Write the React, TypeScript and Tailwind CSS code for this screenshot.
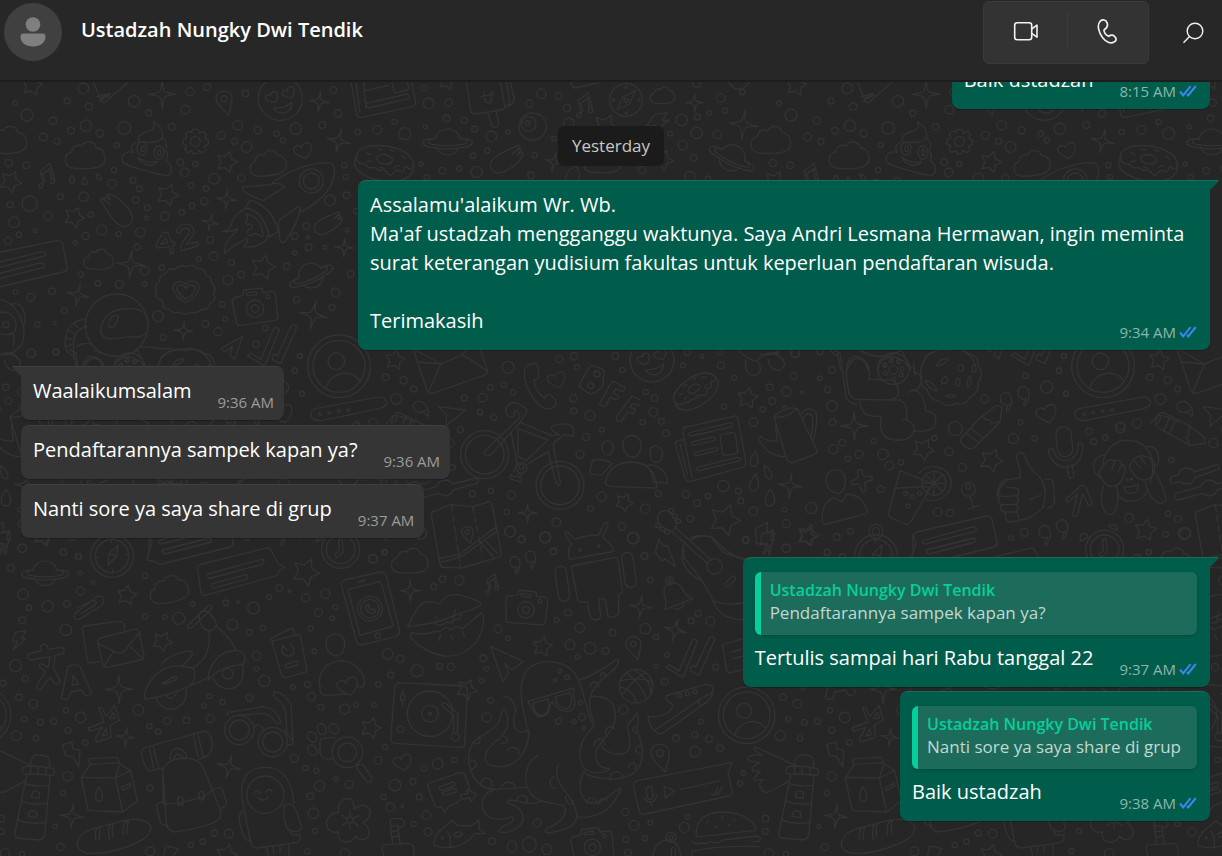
import type { ReactNode } from "react";

type Dot = [number, number, number];

/* ---------- wallpaper shapes ---------- */

const TILE = 764;

function Region({ x, y, children }: { x: number; y: number; children: ReactNode }) {
  return <g transform={`translate(${x} ${y}) scale(0.33333)`}>{children}</g>;
}

function Dots({ list }: { list: Dot[] }) {
  return (
    <>
      {list.map(([x, y, r], i) => (
        <circle key={i} cx={x} cy={y} r={r} />
      ))}
    </>
  );
}

function Stars({ list }: { list: Dot[] }) {
  return (
    <>
      {list.map(([x, y, r], i) => {
        const tilt = -80 + ((i * 37) % 20);
        const pts = Array.from({ length: 10 }, (_, k) => {
          const a = ((tilt + k * 36) * Math.PI) / 180;
          const d = k % 2 ? r * 0.52 : r;
          return `${(x + d * Math.cos(a)).toFixed(1)},${(y + d * Math.sin(a)).toFixed(1)}`;
        });
        return <polygon key={i} points={pts.join(" ")} />;
      })}
    </>
  );
}

function Sparkles({ list }: { list: Dot[] }) {
  return (
    <>
      {list.map(([x, y, r], i) => (
        <path
          key={i}
          transform={`translate(${x} ${y}) rotate(${(i * 7) % 15}) scale(${r / 40})`}
          d="M0 -40Q2 -7 8 -7Q14 -4 40 0Q10 2 8 8Q4 12 0 40Q-2 12 -8 8Q-10 4 -40 0Q-10 -4 -8 -8Q-4 -12 0 -40Z"
        />
      ))}
    </>
  );
}

function Place({ x, y, s = 1, r = 0, children }: { x: number; y: number; s?: number; r?: number; children: ReactNode }) {
  return <g transform={`translate(${x} ${y}) rotate(${r}) scale(${s})`}>{children}</g>;
}

const Cloud = () => (
  <path d="M-38 38C-66 32-66-4-40-10C-38-28-22-34-10-28C2-48 32-42 34-22C58-22 70 14 50 30C36 42-14 42-38 38Z" />
);
const Heart = () => <path d="M8 26C-4 22-24 12-27 2C-28-14-8-16-4-6C0-22 24-30 26-8C27 6 16 20 8 26Z" />;
const Note = () => (
  <path d="M-12 24L-22-14L8-38L22 12M-20-2L8-22M-12 24C-14 38-26 42-26 32C-26 24-18 20-12 24M-6 18L-14-6L6-20L12 8M22 12C24 22 12 26 10 18C8 10 16 6 22 12" />
);
const Planet = () => (
  <>
    <path d="M-38-8C-30-50 30-50 38-8M-34 16C-22 46 22 46 34 16" />
    <path d="M-38-10C-86-12-86 14-40 17C-14 22 14 22 40 17C86 14 86-12 38-10M-38-10C-64-8-64 6-38 8C-12 13 12 13 38 8C64 6 64-8 38-10" />
  </>
);
const Donut = () => (
  <>
    <ellipse rx="24" ry="14" transform="rotate(12)" />
    <path d="M-84-10C-84-62 90-48 86 20C84 32 70 30 66 22C60 18 56 50 44 34C30 24 24 60 10 42C0 24-12 40-22 30C-34 14-44 38-56 16C-66 10-84 20-84-10Z" />
    <path d="M-84-10C-110 34-44 66 20 66C70 66 94 40 86 8M-54-20l12 6M-22-32l14 4M18-28l12 4M50-10l12 8M-52 8l12-4M30 24l14-6M-14 24l14 4" />
  </>
);
const Camera = () => (
  <>
    <path d="M-62-26L-36-34L-34-50L20-56L24-42L50-46Q60-46 62-34L68 30Q68 40 58 42L-46 56Q-54 56-56 46L-68-14Q-70-24-62-26Z" />
    <circle cy="6" r="26" />
    <circle cy="6" r="11" />
    <circle cx="38" cy="-30" r="6" />
    <rect x="-22" y="-44" width="32" height="9" rx="4" transform="rotate(-6)" />
  </>
);
const Avatar = () => (
  <>
    <circle r="94" />
    <circle r="78" />
    <circle cx="-8" cy="-15" r="25" />
    <path d="M-40 66C-26 14 40 8 62 42" />
  </>
);
const Pin = () => (
  <>
    <path d="M14 44C0 26-24 12-24-8C-24-34 20-36 24-10C24 12 18 22 14 44Z" />
    <circle cy="-6" r="9" />
  </>
);
const Emoji = () => (
  <>
    <circle r="66" />
    <Place x={-26} y={-4} s={0.7} r={-12}><Heart /></Place>
    <Place x={24} y={-18} s={0.7} r={-12}><Heart /></Place>
    <path d="M-20 28C0 32 22 24 34 12C36 30 22 46 6 44C-8 44-16 38-20 28Z" />
  </>
);
const Compass = () => (
  <>
    <circle r="64" />
    <circle r="50" />
    <path d="M-12 28L-10-6L18-32L14 0ZM-10-6L14 0M-2-50v10M2 50v-10M50-4l-10 2M-50 4l10-2" />
  </>
);
const Comet = () => (
  <path d="M-48-24C-30-2-20 30 8 48C30 64 56 38 44 14C34-8 4-38-20-44C-36-44-26-36-18-28C-30-34-46-42-36-28L-18-12C-32-24-54-40-48-24Z" />
);
const Bolt = () => <path d="M-22-30L20-44L8-8L26-10L-18 48L-6 6L-28 10Z" />;
const Quotes = () => (
  <path d="M-18 8C-46 22-56-22-30-26C-8-28-4 10-24 32C-30 30-24 16-18 8M34-10C6 4-4-40 22-44C44-46 48-8 28 14C22 12 28-2 34-10" />
);
const Checks = () => (
  <>
    <path d="M-80 30L-68 22L-40 42L0-52Q10-58 16-48L-28 60Z" />
    <path d="M-6 32L4 24L10 30L52-60Q62-66 68-54L20 54L-4 42Z" />
  </>
);
const Clock = () => (
  <>
    <circle r="57" />
    <circle r="43" />
    <path d="M-6-30L4-32L8 8L-12 24L-18 16L-4 2Z" />
  </>
);
const Bubble = () => (
  <path d="M-108-10Q-112-24-98-28L104-78Q116-80 120-68L140-32L162-18L142-8Q144 4 134 8L-86 68Q-94 70-98 60ZM-76 2L92-44Q102-36 92-28L-72 16Q-82 8-76 2M-62 32L42 4Q52 10 42 18L-58 46Q-68 40-62 32" />
);
const Pencil = () => (
  <path d="M-76 18L-18-44L30-80L46-74L40-30L-36 46Q-52 58-70 40Q-82 28-76 18ZM-18-44Q-6-48-2-36Q12-42 14-24Q28-32 40-30M-62 2L-22 34M-48-12L-8 20" />
);
const MilkDrop = () => <path d="M0-22C14 0 14 22 0 22C-14 22-14 2 0-22Z" />;

function Doodles() {
  return (
    <g id="doodles">
      <Region x={0} y={80}>
        <Dots
          list={[
            [250, 25, 16], [201, 63, 9], [267, 80, 11], [402, 64, 17], [446, 99, 9], [570, 35, 12], [621, 21, 10],
            [556, 89, 13], [736, 40, 10], [1000, 30, 10], [1014, 100, 11], [967, 135, 10], [887, 146, 17], [1073, 156, 8],
            [45, 70, 7], [81, 105, 18], [159, 122, 11], [258, 137, 17], [299, 160, 11], [213, 152, 10], [373, 144, 19],
            [515, 140, 10], [713, 136, 14], [664, 166, 12], [704, 184, 9], [740, 201, 16], [773, 151, 11], [830, 161, 8],
            [849, 181, 8], [130, 171, 12], [171, 184, 9], [350, 195, 8], [342, 271, 8], [26, 249, 11], [79, 256, 10],
            [336, 311, 13], [541, 246, 10], [586, 252, 8], [554, 277, 13], [399, 301, 9], [418, 326, 9], [643, 296, 16],
            [724, 294, 11], [573, 316, 8], [618, 326, 8], [181, 350, 9], [251, 350, 14], [407, 359, 10], [576, 377, 8],
            [613, 364, 11], [545, 397, 8], [494, 409, 13], [442, 383, 9], [440, 414, 6], [30, 374, 9], [89, 371, 23],
            [144, 409, 13], [272, 404, 8], [42, 427, 16], [57, 464, 8], [106, 452, 6], [24, 483, 11], [305, 450, 15],
            [257, 468, 11], [356, 462, 8], [421, 457, 14], [226, 488, 6], [411, 501, 9], [631, 479, 10], [641, 529, 13],
            [596, 537, 7], [694, 547, 9], [434, 573, 13], [486, 563, 8], [242, 583, 8], [294, 610, 8], [358, 613, 12],
            [433, 613, 7], [684, 600, 14], [724, 584, 10], [860, 559, 10], [884, 519, 6], [926, 502, 10], [974, 502, 6],
            [924, 472, 5], [919, 438, 10], [884, 469, 10], [990, 361, 16], [1040, 346, 10], [1038, 291, 8], [1033, 256, 8],
            [1069, 394, 8], [1042, 450, 6], [1052, 582, 10], [1007, 637, 13], [996, 682, 9], [890, 659, 9], [666, 673, 8],
            [676, 718, 7], [616, 731, 10], [654, 755, 12], [490, 772, 9], [474, 709, 16], [796, 744, 8], [768, 793, 10],
            [900, 828, 8], [193, 692, 9], [156, 634, 10], [92, 652, 12], [47, 636, 7], [112, 733, 8], [164, 729, 5],
            [94, 820, 12], [167, 816, 8],
          ]}
        />
        <Stars list={[[96, 16, 32], [32, 305, 34], [223, 412, 32], [503, 345, 34], [680, 246, 33], [789, 562, 38]]} />
        <Sparkles
          list={[
            [487, 43, 42], [958, 65, 30], [1016, 183, 36], [680, 358, 30], [631, 427, 26], [392, 553, 42], [234, 645, 34],
            [551, 752, 28], [940, 705, 42], [1033, 503, 28],
          ]}
        />
        <Place x={255} y={226}><Cloud /></Place>
        <Place x={803} y={250} s={0.92} r={-6}><Cloud /></Place>
        <Place x={20} y={180}><Cloud /></Place>
        <Place x={295} y={538} s={0.75}><Cloud /></Place>
        <path d="M216 285C206 298 206 308 216 308C226 308 226 298 216 285ZM253 291C244 304 246 314 254 314C266 314 264 302 253 291ZM288 282C290 298 298 304 304 298C308 290 298 284 288 282Z" />
        <Place x={142} y={288}><Note /></Place>
        <path d="M278 0L300 55L328 41L290 50M328 41C334 44 322 52 310 56L298 62L312 69L392 0" />
        {/* pile with eyes */}
        <path d="M415 182C412 158 440 158 456 150C466 144 462 134 462 126C478 136 490 148 488 168C486 184 460 190 428 186Q416 188 415 182M410 188C392 194 392 210 400 218C380 210 360 224 368 246C378 258 480 286 500 286C520 282 518 252 498 242C508 224 496 206 492 212M488 176C500 182 502 194 498 204M414 232C432 246 452 250 472 244C466 262 426 260 414 232Z" />
        <ellipse cx="426" cy="206" rx="15" ry="20" /><ellipse cx="477" cy="218" rx="15" ry="20" />
        <ellipse cx="428" cy="206" rx="5" ry="9" /><ellipse cx="478" cy="218" rx="5" ry="9" />
        {/* gear */}
        <path d="M576 158L578 148L594 148L598 160L610 154L620 164L614 176L625 180L625 194L614 198L618 210L608 218L596 212L592 221L580 221L576 212L564 218L554 208L560 196L549 192L549 178L560 174L556 162L566 153Z" />
        <circle cx="586" cy="184" r="15" />
        <Place x={672} y={62}><Pin /></Place>
        <Place x={841} y={55}><Emoji /></Place>
        <Place x={908} y={209}><Heart /></Place>
        {/* rocket */}
        <path d="M815 310C870 270 930 248 985 248Q1002 250 1004 268C1004 320 970 360 900 398M815 310Q850 310 854 320L790 362Q740 344 728 328Q724 320 736 320L815 314M752 360L735 384Q790 390 808 470L834 456M752 360Q820 384 834 456M834 424L892 380Q902 378 900 392C894 430 870 460 856 484Q844 492 840 480ZM735 388C706 396 700 420 690 440Q680 456 666 454Q688 460 714 446C700 470 670 480 674 520C690 500 716 490 742 474Q746 486 730 500C770 504 800 490 804 466M738 402C750 410 730 430 742 434C756 426 766 444 748 448C730 456 750 474 760 462C776 454 782 480 790 466C786 440 780 410 738 402" />
        <circle cx="934" cy="303" r="36" /><circle cx="934" cy="303" r="24" />
        <Place x={350} y={387}><Comet /></Place>
        <Place x={988} y={430} s={0.8} r={100}><Comet /></Place>
        {/* 42 */}
        <path d="M492 456L468 492Q466 504 476 504L508 500L512 522L520 520L518 498L526 494L524 486L516 486L504 458ZM498 474L502 490L482 492ZM530 456C530 426 580 424 582 452C584 468 566 478 560 492L592 486Q600 492 592 498L546 512Q540 508 544 496C550 476 570 466 568 452C564 438 542 444 540 460Z" />
        {/* badge */}
        <path d="M500 578Q506 562 526 568Q540 552 560 560Q580 550 592 566Q614 564 618 586Q636 590 634 608Q652 622 640 640Q652 662 630 670Q626 692 604 688Q590 704 572 696Q554 710 540 696Q520 704 510 688Q484 688 488 662Q460 654 470 634Q460 614 478 606Q478 584 500 578Z" />
        <path d="M556 669C536 654 520 642 519 622C524 600 548 600 558 614C568 598 594 600 597 622C594 646 574 658 556 669ZM556 658C542 646 530 636 530 622C534 610 550 612 558 626C566 612 584 610 586 624C584 640 572 650 556 658Z" />
        <Place x={765} y={680}><Camera /></Place>
        <Place x={933} y={587} s={0.95} r={-24}><Planet /></Place>
        {/* astronaut */}
        <circle cx="350" cy="736" r="94" />
        <path d="M302 756C304 700 350 682 400 686Q438 690 444 720M302 756C310 790 350 772 390 770Q430 776 444 750M328 740C322 716 344 700 354 708C356 724 340 750 328 740ZM256 718C210 720 192 760 196 800Q204 826 222 828L230 870M222 828C216 780 220 750 260 740M206 750l16 12M196 774l20 4M198 800l18-6M224 730l10 14M250 870C262 824 300 822 312 870M230 800Q250 784 276 794M342 870C346 820 412 816 440 870M410 806L440 864M418 800C460 800 490 810 516 806M474 860C480 820 520 806 560 806C600 804 630 830 634 860" />
        <circle cx="382" cy="840" r="5" /><circle cx="404" cy="844" r="6" /><circle cx="362" cy="854" r="5" />
        {/* paper plane */}
        <path d="M662 806L728 770L704 838L690 824L698 798L676 816Z" />
        <Place x={822} y={797}><Checks /></Place>
        {/* banner */}
        <path d="M-16 520L170 482Q184 480 188 494L202 564Q200 574 190 576L-16 624M-16 550L130 514Q142 520 134 528L-16 566M-16 584L124 548Q138 552 132 562L-16 600" />
        <path d="M-10 656C50 660 86 740 66 792Q40 830 -10 824M36 672C70 664 84 710 70 742M-10 700C14 690 40 700 48 730C52 760 30 770 -6 760M30 764Q48 750 40 800M10 820Q50 820 62 850" />
        <circle cx="18" cy="734" r="9" />
      </Region>

      <Region x={350} y={80}>
        <Dots
          list={[
            [222, 24, 8], [236, 70, 16], [296, 68, 11], [290, 115, 10], [343, 121, 9], [134, 126, 8], [82, 150, 13],
            [164, 161, 18], [226, 140, 6], [374, 147, 9], [424, 169, 16], [474, 157, 7], [412, 212, 8], [369, 227, 8],
            [277, 272, 10], [328, 266, 8], [380, 276, 17], [213, 252, 6], [230, 292, 8], [543, 286, 10], [554, 226, 8],
            [538, 71, 11], [574, 41, 14], [626, 48, 11], [651, 84, 11], [612, 176, 7], [656, 130, 16], [1042, 111, 9],
            [995, 120, 17], [1040, 159, 17], [960, 161, 7], [998, 196, 14], [1031, 234, 10], [1078, 99, 7], [1125, 92, 8],
            [1112, 54, 13], [1177, 36, 8], [1102, 164, 12], [1020, 290, 16], [876, 270, 11], [1040, 10, 12], [1074, 296, 8],
          ]}
        />
        <Stars list={[[290, 2, 28], [766, 140, 38], [938, 240, 32]]} />
        <Sparkles list={[[1034, 68, 28], [1180, 134, 44], [612, 246, 28]]} />
        <path d="M4 10L20 104Q26 116 36 112L186 80Q198 76 196 62L184 0M18 10L30 96M40 0L48 84M46 32L116 16M124 0L132 34Q134 40 142 38L172 30Q178 28 176 20L170 0M50 70L170 42Q182 48 176 56L56 84Q44 78 50 70" />
        <path d="M348 0L362 92Q366 104 378 102L452 90Q466 88 464 76L450 0M464 80Q494 76 492 54L480 0M470 80Q480 74 478 60L468 0M414 100L426 138Q438 148 446 134L440 96M394 50L430 42M400 48L402 36M428 46L426 34M404 56C408 76 428 72 424 50" />
        <circle cx="548" cy="140" r="41" /><circle cx="536" cy="132" r="22" /><circle cx="533" cy="130" r="7" />
        <Place x={293} y={186}><Planet /></Place>
        <Place x={104} y={238}><Donut /></Place>
        <Place x={1146} y={234} r={26}><Planet /></Place>
        <Place x={474} y={238} s={0.95} r={98}><Comet /></Place>
        <Place x={706} y={76}><Note /></Place>
        <circle cx="828" cy="60" r="49" /><path d="M802 88L818 52L856 32L838 72Z" /><circle cx="828" cy="61" r="6" />
        <circle cx="828" cy="22" r="3" /><circle cx="829" cy="98" r="3" /><circle cx="791" cy="60" r="3" /><circle cx="866" cy="60" r="3" />
        <Place x={937} y={46} s={0.62}><Cloud /></Place>
        <path d="M914 104L952 98L938 122L956 120L908 162L918 136L890 138Z" />
        <path d="M660 0Q664 22 676 24L746 8M1134 0Q1150 36 1174 26Q1190 22 1196 6M646 300Q650 270 676 258Q690 270 688 298" />
        <Place x={758} y={240} s={0.95}><Cloud /></Place>
      </Region>

      <Region x={280} y={340}>
        <Dots
          list={[
            [59, 47, 7], [45, 92, 8], [66, 161, 8], [317, 112, 10], [371, 121, 11], [401, 147, 9], [349, 177, 16],
            [230, 258, 12], [279, 250, 14], [553, 174, 9], [608, 173, 13], [631, 142, 8], [671, 134, 8], [699, 157, 8],
            [685, 82, 18], [600, 217, 8], [641, 232, 9], [541, 269, 9], [508, 309, 14], [838, 57, 11], [882, 49, 11],
            [891, 81, 8], [1006, 48, 10], [1027, 90, 8], [880, 175, 11], [882, 213, 9], [930, 227, 15], [966, 269, 7],
            [918, 291, 11], [900, 343, 12], [577, 461, 9], [633, 452, 8], [694, 465, 12], [680, 516, 8], [690, 575, 16],
            [725, 598, 10], [795, 592, 15], [829, 547, 13], [820, 635, 9], [965, 470, 14], [932, 505, 9], [1026, 560, 11],
            [1060, 595, 17], [424, 580, 16], [313, 636, 8], [279, 657, 13],
          ]}
        />
        <Stars list={[[345, 60, 31], [1032, 487, 28]]} />
        <Sparkles list={[[743, 519, 28]]} />
        <Place x={177} y={79}><Avatar /></Place>
        <path d="M106 206L290 172Q316 168 320 186Q322 198 298 206L122 242Q94 242 92 224Q92 210 106 206Z" />
        <circle cx="121" cy="223" r="4" /><circle cx="148" cy="218" r="4" /><circle cx="176" cy="214" r="4" /><circle cx="205" cy="210" r="4" />
        <path d="M390 0L442 154Q446 162 456 160L612 106Q624 102 622 90L590 0M414 66L482 72L548 44L620 92M482 72L446 156M396 24L482 72M548 44L584 0" />
        <path d="M440 210C410 230 390 204 404 188C428 174 452 204 444 230C440 226 436 220 428 216M476 200L556 210L498 258L500 226Z" />
        <path d="M320 250L340 226Q370 226 404 248M352 228l-8 20M376 232l-6 16" />
        {/* handset and heart */}
        <path d="M740 78Q760 64 774 76L776 112Q770 122 762 118C760 142 778 162 794 176Q798 160 812 164L828 182Q832 198 812 206C778 214 736 150 734 108Q732 86 740 78Z" />
        <Place x={829} y={117}><Heart /></Place>
        <path d="M936 76L966 86Q978 96 968 112Q978 130 960 146Q946 164 928 160L902 144Q896 138 900 130L928 82Q932 76 936 76Z" />
        <circle cx="951" cy="102" r="9" /><circle cx="932" cy="137" r="9" />
        <path d="M1000 124L1034 142Q1036 154 1024 154L1008 146L1000 158L1016 168Q1016 180 1004 178L990 172L978 196Q966 204 958 192L994 128ZM1056 168L1080 180M1056 168L1008 232Q1010 246 1024 244L1042 216L1060 222L1066 208L1050 202L1058 190L1080 196" />
        {/* bicycle */}
        <circle cx="614" cy="344" r="72" /><circle cx="614" cy="344" r="58" />
        <circle cx="840" cy="436" r="72" /><circle cx="840" cy="436" r="58" />
        <path d="M612 336L720 232C716 210 700 206 704 222C700 240 676 230 678 208C682 186 706 184 720 194L738 206Q744 214 736 222L722 246L630 346Q618 352 612 336M722 248L816 286L838 284Q812 272 814 260Q850 246 874 256Q884 270 880 288L852 284L822 308M714 266L804 300L738 362L714 350ZM694 280L712 376M806 334L740 374M804 336L828 428Q836 440 842 430L820 320L822 308" />
        <circle cx="724" cy="384" r="16" /><circle cx="724" cy="380" r="7" /><path d="M710 376L700 396M720 398L704 412L692 404L690 416L722 426L726 416L716 412L734 394" />
        {/* people */}
        <path d="M966 324C962 296 1000 296 1000 322C998 356 968 350 966 324ZM1028 316C1026 278 1080 276 1084 314C1080 364 1036 364 1028 316ZM940 360Q970 354 996 370L964 406L930 402Q930 376 940 360ZM976 430C980 390 1010 366 1056 366C1100 368 1130 396 1130 444L1000 440Q978 438 976 430Z" />
        {/* map */}
        <path d="M456 516L512 494L578 500L624 486Q634 484 636 492L664 640Q664 650 654 652L546 684L492 682Q482 682 480 672L454 524ZM476 656L540 642L650 560M480 668L544 650L654 572M600 606L640 650M612 598L652 640" />
        <path strokeDasharray="6 4" d="M514 496L542 682M578 502L608 650" />
        <Place x={562} y={580} s={0.7}><Pin /></Place>
      </Region>

      <Region x={640} y={340}>
        <Dots
          list={[
            [17, 156, 8], [44, 174, 10], [40, 216, 13], [64, 244, 9], [8, 246, 8], [78, 280, 10], [142, 38, 9], [186, 49, 6],
            [240, 36, 8], [129, 76, 7], [243, 76, 11], [283, 113, 7], [252, 200, 8], [466, 40, 13], [540, 36, 9],
            [461, 108, 11], [539, 115, 7], [576, 90, 10], [389, 142, 10], [397, 183, 10], [368, 208, 8], [439, 155, 14],
            [486, 157, 4], [563, 149, 9], [576, 199, 16], [578, 247, 10], [341, 246, 13], [607, 308, 10], [580, 327, 14],
            [657, 343, 12], [623, 356, 8], [702, 303, 8], [729, 343, 16], [748, 377, 13], [783, 367, 8], [883, 294, 8],
            [927, 335, 12], [946, 266, 21], [967, 382, 12], [1034, 177, 12], [722, 448, 10], [893, 516, 13], [930, 519, 11],
            [514, 504, 17], [433, 509, 7], [439, 551, 12], [439, 625, 13], [590, 591, 10], [632, 574, 9], [562, 637, 10],
            [340, 514, 13], [302, 483, 9], [295, 453, 9], [250, 438, 17], [203, 468, 8], [171, 489, 10], [138, 463, 11],
            [151, 536, 10], [55, 461, 9], [16, 506, 14], [14, 648, 10], [317, 601, 10], [608, 650, 9],
          ]}
        />
        <Stars list={[[323, 174, 32], [850, 328, 34], [1054, 361, 36], [254, 540, 48], [504, 586, 34]]} />
        <Sparkles list={[[643, 258, 42], [451, 437, 36]]} />
        <Place x={36} y={60}><Emoji /></Place>
        <Place x={162} y={146} s={0.82} r={-42}><Donut /></Place>
        {/* newspaper */}
        <path d="M136 262L284 228Q292 226 294 236L318 370Q318 380 308 382L152 424Q138 426 134 412L106 314Q106 304 114 302L134 298M128 274L156 414M134 270Q126 262 136 260M120 312L142 404M148 278L272 248Q284 252 276 260L154 288Q144 286 148 278M156 306L220 290Q232 294 222 302L160 316Q150 314 156 306M164 338L228 322Q238 326 230 332L168 348Q158 346 164 338M172 382L292 352Q306 354 300 362L178 392Q166 390 172 382" />
        <rect x="244" y="280" width="46" height="64" rx="8" transform="rotate(-8 267 312)" />
        {/* teapot */}
        <path d="M402 230L440 358Q446 370 458 368L526 342Q534 338 530 330L472 206Q436 196 402 230ZM402 230Q432 238 472 206M428 204Q434 192 438 202M406 256L412 302Q390 308 362 290Q350 290 358 300C372 330 400 350 436 350M484 222C494 200 530 200 530 232C530 260 526 284 518 304M490 236C500 214 518 218 518 240Q518 260 514 290" />
        <path d="M346 334C326 360 326 380 344 380C358 374 354 354 346 334ZM374 376C370 402 378 418 392 416C402 404 392 390 374 376ZM348 402C324 430 322 452 342 454C362 448 356 424 348 402ZM390 448C372 474 370 494 388 498C410 494 408 468 390 448Z" />
        <path d="M30 344C24 312 62 308 68 340C64 376 34 376 30 344ZM20 376C52 370 80 390 82 430L40 426Q38 400 20 376Z" />
        {/* guitar */}
        <path d="M54 546Q50 520 66 514Q84 508 90 516L108 546Q112 566 94 574L62 560ZM104 560L214 660M94 574L204 672M152 596Q180 578 220 594Q250 634 310 660M134 630C112 660 140 700 184 722" />
        <circle cx="224" cy="679" r="23" />
        <circle cx="93" cy="512" r="7" /><circle cx="104" cy="528" r="7" /><circle cx="115" cy="544" r="7" /><circle cx="54" cy="556" r="7" /><circle cx="68" cy="568" r="7" /><circle cx="82" cy="576" r="7" />
        <path d="M56 598L72 620L82 616L106 680L74 656L66 664L46 636ZM346 566L382 548L380 578L404 580L388 646L382 610L350 612Z" />
        {/* sitting figure */}
        <path d="M580 28L600 40L618 170Q626 192 652 192M688 118C694 74 670 44 638 50C610 66 620 120 626 156Q634 180 660 178M686 118L754 120Q776 130 776 160Q770 180 740 180L660 178Q660 222 694 228L724 230M720 180L780 180Q804 190 800 238M724 230C712 290 744 304 784 300C834 296 836 240 786 238M806 158C820 140 850 148 858 214C894 214 892 250 878 266Q850 278 824 272M652 30C720 60 750 50 788 30M820 96Q850 100 842 132Q830 160 816 150M820 70L826 110" />
        <circle cx="760" cy="86" r="47" /><circle cx="760" cy="90" r="13" />
        <circle cx="754" cy="62" r="6" /><circle cx="776" cy="66" r="6" /><circle cx="734" cy="76" r="6" /><circle cx="786" cy="86" r="6" /><circle cx="736" cy="100" r="6" /><circle cx="784" cy="104" r="6" /><circle cx="762" cy="118" r="6" />
        {/* cookie */}
        <path d="M870 40Q850 50 852 68Q834 90 846 112Q840 140 862 150Q866 180 900 184Q920 206 948 190Q980 198 990 170Q1020 156 1014 130Q1034 100 1016 80Q1014 44 984 40Q960 20 930 32Q894 24 870 40Z" />
        <ellipse cx="962" cy="84" rx="8" ry="11" /><ellipse cx="914" cy="121" rx="8" ry="11" transform="rotate(30 914 121)" /><ellipse cx="954" cy="127" rx="6" ry="12" /><ellipse cx="1002" cy="86" rx="6" ry="11" />
        <path d="M890 78Q896 56 924 56Q920 72 890 78ZM856 122Q880 124 892 152Q866 150 856 122ZM984 142Q976 126 990 108Q1000 130 984 142ZM916 168q16-8 32 0q-16 8-32 0Z" />
        <path d="M318 60C310 96 330 108 346 106C364 102 366 80 352 62M386 60C386 84 408 96 424 88C440 76 434 56 410 42M290 28Q340 70 352 62Q380 30 410 42L420 28" />
        <Place x={1040} y={276}><Pencil /></Place>
        {/* person, plus, glass, lemon */}
        <path d="M558 424C556 380 614 378 616 420C616 450 604 460 590 460C570 456 562 444 558 424ZM580 472L606 486L620 462Q674 466 682 520L560 552Q546 556 546 544C546 500 556 486 580 472ZM652 392L664 388L670 408L696 410L696 420L674 428L678 452L668 456L656 432L636 434L634 424L654 414Z" />
        <path d="M780 392L746 518Q744 526 752 532L800 554Q808 552 812 546L878 432ZM768 444L866 440" />
        <circle cx="797" cy="460" r="6" /><circle cx="817" cy="470" r="6" /><circle cx="838" cy="460" r="6" /><circle cx="804" cy="498" r="6" />
        <path d="M838 398C870 366 930 378 934 428C932 470 890 490 860 478" />
        <circle cx="882" cy="430" r="36" />
        <path d="M882 430L882 394M882 430L907 404M882 430L918 430M882 430L908 456M882 430L882 466M882 430L857 456M882 430L857 404M882 430L848 430" />
        <circle cx="985" cy="448" r="21" /><circle cx="985" cy="441" r="7" /><path d="M990 468L1000 500M982 508L1016 496" />
        <circle cx="708" cy="574" r="21" /><circle cx="708" cy="574" r="11" />
        <path d="M820 640L818 590Q820 580 830 576L1040 528Q1052 526 1056 538L1072 610Q1072 620 1062 622L870 668M848 602L1000 560Q1014 564 1006 574L856 612Q844 610 848 602M862 630L998 594Q1010 598 1004 606L868 642Q856 638 862 630" />
      </Region>

      <Region x={920} y={340}>
        <Dots
          list={[
            [302, 246, 7], [280, 296, 15], [344, 295, 8], [380, 141, 18], [438, 161, 7], [317, 107, 8], [417, 92, 8],
            [431, 47, 7], [507, 274, 10], [521, 305, 9], [556, 293, 8], [601, 263, 15], [754, 360, 8], [627, 533, 13],
            [744, 521, 8], [774, 537, 10], [737, 583, 8], [793, 580, 18], [313, 577, 12], [273, 594, 7], [686, 637, 7],
          ]}
        />
        <Stars list={[[676, 571, 34]]} />
        <Place x={286} y={184}><Quotes /></Place>
        <Place x={402} y={583}><Quotes /></Place>
        <Place x={378} y={218} s={1.15}><Heart /></Place>
        {/* thumb */}
        <path d="M232 470C232 440 244 418 264 418L300 414C306 390 290 370 290 348Q296 332 310 340C322 366 330 390 356 408C376 430 380 460 370 500C350 528 320 540 298 540M264 418Q236 440 234 466Q250 472 294 466Q300 448 290 444L262 442M238 470Q230 490 246 494L290 494Q300 478 290 468M244 496Q238 512 254 516L288 516Q298 504 290 494M256 518Q254 544 270 546L294 542Q300 528 290 518M372 420Q400 412 400 430L404 484Q404 500 384 504M330 478L362 466" />
        {/* microphone */}
        <rect x="410" y="260" width="46" height="90" rx="23" transform="rotate(-6 433 305)" />
        <path d="M386 328Q394 322 400 332C410 372 476 376 474 312Q480 304 488 314C492 400 400 400 386 336ZM440 378L448 412Q458 418 462 408L456 374M438 476L482 438Q492 434 498 442L516 488Q516 498 506 496L488 462L472 526Q464 534 458 524L472 462L446 486Q436 486 438 476Z" />
        {/* monkey */}
        <path d="M550 372C552 300 650 270 690 340Q706 400 690 426M550 346C520 346 508 390 540 412M680 320C720 314 724 370 706 378M592 460C610 494 660 492 680 456M612 440Q634 444 654 432Q656 462 630 460Q614 458 612 440Z" />
        <path d="M536 398Q546 380 560 366Q572 354 584 364Q600 356 604 372Q620 376 614 396Q606 436 578 440Q552 440 536 398ZM550 438C540 470 542 520 570 524C596 520 596 470 590 440M628 380Q638 350 664 346L694 356Q708 370 702 392Q700 420 668 420Q642 414 628 380ZM704 396C730 440 740 470 736 484C716 502 680 470 676 422M584 364l-8 26M604 374l-10 24M640 360l22 24M660 350l16 22" />
        <circle cx="622" cy="419" r="3" /><circle cx="635" cy="417" r="3" />
        <Place x={770} y={286} r={74}><Pencil /></Place>
        {/* sliders */}
        <path d="M754 410L776 404Q780 384 800 384Q818 386 822 396L890 374Q902 376 896 388L826 412Q820 432 800 432Q784 430 778 424L758 430Q744 424 754 410ZM768 460L842 440Q850 420 868 420Q886 422 890 432L960 414Q972 418 964 430L892 450Q886 466 868 468Q854 466 848 460L774 480Q758 474 768 460Z" />
        <path d="M482 604Q476 580 494 580Q506 584 502 592ZM564 558Q578 548 592 560Q594 572 584 570Z" />
      </Region>

      <Region x={0} y={530}>
        <Dots
          list={[
            [67, 55, 12], [190, 67, 9], [235, 79, 9], [33, 114, 10], [241, 129, 6], [280, 158, 5], [241, 183, 12],
            [69, 193, 16], [143, 229, 17], [87, 233, 8], [67, 271, 10], [201, 221, 10], [435, 137, 8], [198, 300, 17],
            [577, 223, 7], [678, 218, 8], [714, 216, 4], [761, 234, 18], [697, 284, 16], [536, 265, 18], [494, 261, 7],
            [435, 260, 8], [748, 307, 9], [789, 294, 8], [838, 174, 10], [868, 183, 4], [808, 201, 7], [917, 203, 12],
            [976, 191, 14], [955, 248, 12], [1006, 231, 8], [997, 265, 7], [932, 295, 8], [943, 364, 7], [770, 377, 13],
            [769, 416, 7], [793, 453, 17], [878, 472, 7], [922, 463, 9], [934, 500, 12], [963, 532, 9], [1034, 537, 15],
            [1069, 524, 7], [748, 503, 10], [628, 499, 7], [668, 516, 8], [612, 528, 7], [631, 566, 12], [560, 571, 10],
            [501, 573, 11], [448, 588, 8], [474, 605, 8], [415, 540, 16], [47, 407, 18], [75, 446, 9], [57, 502, 10],
            [100, 521, 13], [9, 459, 9], [198, 541, 8], [242, 562, 16], [73, 567, 8], [121, 577, 9], [161, 574, 9],
            [204, 601, 9], [256, 638, 8], [108, 625, 8], [49, 617, 15], [203, 739, 14], [189, 789, 8], [165, 889, 6],
            [182, 951, 11], [450, 774, 9], [883, 685, 12], [916, 714, 8], [949, 722, 8], [1008, 748, 7], [958, 768, 16],
            [1047, 763, 12], [931, 799, 10], [940, 850, 16], [945, 903, 8], [643, 909, 9], [686, 911, 13], [608, 935, 8],
            [572, 945, 8], [451, 964, 13], [15, 970, 14], [66, 972, 8], [1119, 86, 12], [922, 964, 8], [1035, 970, 14],
          ]}
        />
        <Stars list={[[380, 196, 31], [487, 334, 31], [917, 126, 42], [130, 20, 28], [1112, 594, 32], [680, 976, 34]]} />
        <Sparkles list={[[357, 478, 42], [378, 621, 28], [687, 710, 36], [216, 859, 36]]} />
        <Place x={135} y={130} s={0.95}><Planet /></Place>
        <Place x={336} y={78}><Compass /></Place>
        <Place x={506} y={178} s={0.98} r={-10}><Cloud /></Place>
        <Place x={698} y={130} s={0.97}><Bubble /></Place>
        <path d="M448 20L456 40L440 90L470 96L480 104L690 50Q702 44 698 30M486 60L634 24M486 60Q490 76 500 70L630 38" />
        <Place x={1022} y={58}><Clock /></Place>
        <path d="M226 250L290 200Q308 194 312 210Q312 220 302 228L238 268Q222 272 222 258ZM232 234L278 212Q296 212 286 224L244 250" />
        {/* letters in envelopes */}
        <path d="M248 300Q244 292 254 288L356 274Q368 274 372 286L374 300M248 302L262 392Q266 402 280 398L302 394M294 338Q292 328 302 324L404 298Q416 296 418 308L432 376Q432 388 422 390L322 412Q310 412 308 400ZM296 342L350 368Q366 372 376 360L418 308M312 408L340 366M426 384L392 350" />
        <Place x={58} y={330} s={0.7} r={12}><Bolt /></Place>
        <Place x={12} y={36} s={0.8}><Bolt /></Place>
        {/* translate glyphs */}
        <path d="M86 372L124 362L122 348Q132 338 142 348L144 358L186 352Q198 360 190 370L166 376L160 412L180 452Q178 464 166 462L150 442L122 478Q108 482 110 468L136 424L118 410Q116 398 132 404L144 414L150 380L92 390Q76 386 86 372ZM204 410Q216 402 238 406L274 486Q272 498 256 496L244 480L212 486L206 506Q192 512 184 504ZM220 436L216 466L236 462Z" />
        {/* scooter */}
        <path d="M564 286L626 226Q640 222 632 240L574 294Q560 300 564 286ZM598 252Q604 240 622 244Q640 256 650 284Q642 304 624 302C604 294 594 272 598 252ZM626 304C636 350 616 390 580 414Q590 436 576 462C540 486 480 502 436 508Q430 500 436 484C450 440 490 404 540 408L580 414M648 288Q690 320 706 358M484 404Q500 376 570 362Q584 366 570 384L548 408M576 466L622 444M624 452C624 400 670 350 722 364Q744 382 730 402C700 408 660 408 624 452ZM486 460L522 440Q540 440 526 450L494 462ZM468 504C480 540 520 550 550 520Q562 500 558 476M500 498Q512 516 530 490M640 446C660 490 720 486 728 440Q732 420 728 404" />
        <circle cx="683" cy="431" r="16" />
        {/* passport */}
        <path d="M816 334L844 434Q848 444 858 442L912 428Q922 426 920 416L902 322Q900 314 892 314L824 332Q814 334 812 326L872 296Q882 296 884 312M856 404L890 392Q900 398 892 404L864 414Q852 414 856 404M848 348L862 362M872 342Q886 356 880 372Q864 386 848 370Q842 358 850 346" />
        {/* contact with heart */}
        <path d="M978 344C976 302 1036 300 1034 342C1032 362 1024 378 1008 378C992 376 982 362 978 344ZM960 470C950 430 980 392 1026 392C1070 394 1100 440 1092 464Q1090 474 1076 472M960 470Q958 498 980 496L1042 492" />
        <Place x={1042} y={466} s={1.15}><Heart /></Place>
        {/* sunglasses */}
        <circle cx="718" cy="600" r="44" /><circle cx="718" cy="600" r="30" /><circle cx="818" cy="636" r="44" /><circle cx="818" cy="636" r="30" />
        <path d="M684 558Q676 544 694 546L790 530Q826 532 842 574Q838 586 826 576Q810 552 784 550L712 556M762 592Q772 578 786 590L792 604M854 602L880 636Q878 646 862 644M878 630L874 530Q864 494 824 484Q816 494 826 504Q850 516 858 550L860 606" />
        {/* paw and magnifier */}
        <ellipse cx="965" cy="597" rx="13" ry="17" transform="rotate(-20 965 597)" /><ellipse cx="1002" cy="596" rx="13" ry="17" transform="rotate(-35 1002 596)" /><ellipse cx="936" cy="621" rx="13" ry="17" transform="rotate(-35 936 621)" /><ellipse cx="937" cy="661" rx="13" ry="17" transform="rotate(-35 937 661)" />
        <path d="M1006 624Q970 620 960 630L960 670Q966 692 1000 686" />
        <circle cx="1042" cy="667" r="46" /><circle cx="1042" cy="667" r="28" />
        <path d="M1072 708Q1080 698 1090 706L1116 744Q1116 758 1102 756L1072 718Z" />
        {/* bluetooth */}
        <path d="M296 532L306 532L318 560L344 526L358 570L330 586L334 622L290 636L286 626L306 592L268 604L264 594L312 576ZM328 566L340 548L346 564ZM318 596L322 614L306 618Z" />
        <path d="M188 644L216 636L218 656L240 662L236 710L218 680L196 676Z" />
        {/* lighthouse */}
        <path d="M92 708Q92 680 106 676Q134 672 146 684L150 712M72 710Q110 704 160 716Q166 726 160 736Q120 732 70 732Q62 718 72 710ZM92 708v26M114 710v24M138 712v24M80 736L44 912Q44 924 54 924L118 930Q130 928 134 916L150 738M80 762Q110 772 146 766M66 814Q100 826 140 820M54 870Q90 884 134 878M94 802L98 786Q108 780 118 788L118 804ZM84 860L88 846Q98 838 110 848L110 862ZM88 704L-22 652Q-34 650-28 660L-6 676Q-32 672-46 680Q-52 690-40 694L-14 698Q-40 710-34 722L-10 724Q-36 744-28 752L0 748Q-20 760-10 772Q-4 790 14 786L74 754" />
        <circle cx="4" cy="866" r="10" /><circle cx="4" cy="904" r="9" />
        {/* milk */}
        <path d="M266 686L352 682L358 700L392 722L412 812L368 846L270 842Q262 840 262 832L244 744L270 704ZM270 704L356 698M244 742L346 744L392 722M346 744L358 706M346 744L368 846M364 772L390 760L392 768L368 782Z" />
        <Place x={297} y={792}><MilkDrop /></Place>
        {/* bread */}
        <path d="M232 940C236 900 290 894 340 880C390 864 440 862 452 890C456 920 420 936 370 954C320 970 232 986 232 940ZM288 930Q280 892 302 892Q296 916 298 930M328 928Q320 884 340 880Q334 904 338 920M370 914Q366 874 386 870Q380 894 382 910" />
        {/* backpack */}
        <path d="M446 724Q424 690 424 664Q430 652 446 650L608 604Q630 600 638 640Q636 668 620 680L596 688M446 724L486 714M448 654L462 720M460 650L476 714M580 612L594 680M592 608L610 680M510 690C506 640 560 650 560 684M520 688Q528 662 548 680M488 720Q500 688 550 684Q590 684 604 704C620 730 634 780 660 836Q668 860 652 872C620 890 560 902 520 906Q506 900 500 888ZM488 720L490 820Q520 826 580 808Q620 802 634 782M490 816Q468 816 470 834L482 878Q490 888 504 886M640 780Q656 766 668 780L680 818Q676 832 660 836" />
        <rect x="533" y="800" width="16" height="26" rx="8" /><rect x="596" y="784" width="16" height="26" rx="8" />
        {/* smiling astronaut */}
        <circle cx="796" cy="794" r="56" />
        <path d="M730 826C710 740 750 712 796 712C850 712 876 750 882 820M730 826L752 936Q756 954 772 954L890 938Q902 934 900 914M728 844Q714 850 720 880Q730 932 748 932M852 826Q880 812 892 850L904 892Q900 908 880 904L862 896Q848 866 852 826M870 902Q870 920 900 914M776 802C782 814 800 812 804 800M760 790q12-16 22 0M796 788q10-18 22-2M800 954L806 978M820 950V970M840 948V968M866 944L868 978" />
        {/* flower */}
        <path d="M1016 846C1006 800 1068 788 1062 838C1100 804 1134 850 1090 878C1132 910 1090 948 1066 918C1060 944 1006 944 1016 906C968 914 966 850 1016 846Z" />
        <circle cx="1050" cy="870" r="9" /><path d="M1050 860V840M1050 880V898M1060 866L1076 856M1060 876L1074 886M1040 866L1026 856M1042 876L1028 886" />
        <path d="M498 948L534 956L520 978M490 978L498 948" />
      </Region>

      <Region x={370} y={530}>
        <Dots
          list={[
            [44, 67, 8], [9, 86, 13], [455, 28, 11], [526, 22, 17], [420, 4, 16], [550, 64, 10], [789, 24, 17], [823, 77, 10],
            [841, 150, 8], [218, 148, 10], [268, 151, 14], [191, 170, 9], [384, 297, 12], [414, 325, 7], [560, 270, 7],
            [594, 248, 10], [629, 293, 14], [728, 308, 10], [826, 296, 16], [858, 321, 8], [891, 374, 7], [858, 409, 7],
            [884, 455, 10], [600, 344, 15], [660, 355, 18], [706, 363, 10], [623, 380, 7], [340, 385, 10], [349, 417, 7],
            [335, 452, 7], [362, 511, 9], [350, 562, 14], [53, 372, 16], [91, 386, 11], [141, 422, 18], [208, 408, 9],
            [243, 411, 11], [62, 435, 9], [25, 463, 8], [12, 525, 7], [45, 651, 8], [24, 691, 12], [203, 701, 16],
            [252, 690, 8], [162, 715, 8], [75, 766, 17], [129, 754, 9], [41, 801, 8], [148, 801, 9], [61, 832, 13],
            [97, 829, 4], [169, 855, 13], [131, 882, 8], [174, 906, 12], [366, 934, 10], [502, 879, 12], [760, 539, 13],
            [993, 575, 7], [975, 614, 9], [918, 625, 10], [1017, 627, 10], [1050, 655, 10], [975, 665, 16], [1121, 730, 7],
            [1111, 760, 8], [952, 860, 7], [943, 892, 15], [841, 878, 7], [825, 924, 8], [792, 886, 15], [766, 846, 11],
            [768, 928, 9], [774, 968, 10], [985, 250, 9], [963, 273, 9], [1021, 273, 13], [1037, 411, 9], [1127, 30, 9],
          ]}
        />
        <Stars list={[[517, 350, 31], [290, 478, 32]]} />
        <Sparkles list={[[121, 182, 32], [812, 230, 34], [916, 300, 34]]} />
        <Place x={119} y={92} s={0.92}><Cloud /></Place>
        {/* phone */}
        <path d="M-84 172Q-90 156 -76 150L30 126Q44 124 50 140L88 300Q90 316 76 320L-20 344Q-38 346 -42 330ZM-66 178L32 154L70 288L-30 316ZM-36 156L-14 150" />
        <circle cx="0" cy="236" r="37" /><circle cx="0" cy="236" r="28" /><circle cx="23" cy="317" r="8" />
        <path d="M-14 228C-10 248 4 254 18 246L12 236L4 240L-4 232L-2 224Z" />
        <Place x={460} y={103} s={0.9}><Quotes /></Place>
        <Place x={368} y={162} s={0.8}><Note /></Place>
        <Place x={469} y={234} s={0.95} r={12}><Camera /></Place>
        {/* lips */}
        <path d="M112 290C130 260 140 226 166 216Q190 214 208 222C220 200 236 192 262 194C290 200 320 210 334 222C326 236 270 248 220 270C180 284 140 286 112 290ZM124 308C170 320 180 304 210 304Q230 284 240 300Q262 282 276 296C300 280 320 258 334 248C348 260 340 300 320 334C296 364 260 382 220 378C170 366 110 330 124 308ZM196 260l12 14M256 240l-8 26M206 332l6-18M248 328l-6-14M284 318l-8-16M190 276q20 20 40 0q14 8 24-8q20 4 20-16" />
        {/* android */}
        <path d="M598 88Q590 62 604 42L586 14Q584 4 594 6L614 28Q650 14 686 16L702 -20Q714 -26 714 -14L698 22Q726 44 730 60Q730 66 720 66L602 88M604 108L736 82Q742 82 744 90L758 184Q756 192 746 194L746 246Q742 262 724 262Q714 260 712 250L706 206L686 208L692 256Q690 270 674 270Q664 268 660 258L652 216L632 216Q624 216 622 206Z" />
        <circle cx="629" cy="60" r="4" /><circle cx="686" cy="48" r="4" />
        <rect x="560" y="108" width="34" height="106" rx="17" transform="rotate(-8 577 161)" /><rect x="760" y="67" width="34" height="106" rx="17" transform="rotate(-8 777 120)" />
        {/* bell */}
        <path d="M884 240Q892 220 882 190Q880 164 902 160Q930 154 944 188Q952 200 968 206ZM914 236Q930 244 942 222" /><circle cx="899" cy="153" r="12" /><circle cx="899" cy="153" r="5" />
        {/* guitar body */}
        <path d="M946 36Q930 60 944 86Q990 140 1000 160Q1020 190 1030 216Q1050 268 1120 270M966 28Q990 14 1022 20Q1050 60 1070 72L1140 90M1034 214Q1080 230 1130 216M1066 160L1086 138Q1098 136 1096 148L1076 170Q1064 170 1066 160Z" />
        <Place x={790} y={348} s={0.95}><Pin /></Place>
        <Place x={870} y={676} s={1.15}><Pin /></Place>
        <Place x={967} y={382}><Checks /></Place>
        <path d="M362 350L460 394L424 420L404 400L416 430L398 454Z" />
        <path d="M1120 326L1068 340Q1056 342 1058 352L1070 420Q1074 430 1084 428L1128 416M1086 366L1120 356M1090 386L1120 378" />
        {/* basketball */}
        <circle cx="798" cy="469" r="50" /><path d="M752 452Q800 440 844 454M756 494Q800 440 826 430M772 430Q810 460 830 506M790 420Q846 450 842 490M750 470Q790 480 800 518" />
        {/* shoe */}
        <path d="M886 498L1006 464Q1034 462 1028 490Q1020 514 996 526L884 606Q870 614 862 610Q836 590 834 560C860 562 900 556 908 530Q906 518 894 516ZM856 600L984 512Q1010 496 1026 488M984 512L990 526" />
        <circle cx="929" cy="497" r="6" /><circle cx="952" cy="491" r="6" /><circle cx="975" cy="485" r="6" />
        {/* turntable */}
        <path d="M90 458L282 468Q294 470 292 482L284 640Q284 652 272 652L76 640Q62 638 62 626L74 474Q76 458 90 458Z" />
        <circle cx="180" cy="551" r="68" /><circle cx="180" cy="551" r="25" /><circle cx="180" cy="551" r="4" /><circle cx="91" cy="598" r="10" /><circle cx="256" cy="621" r="12" />
        <path d="M214 524Q222 514 230 522L264 552L262 610M214 526L252 558L250 610M98 480V494M98 510V528M92 494h12v18h-12Z" />
        {/* octopus */}
        <path d="M472 608C470 560 440 500 460 440C480 380 590 380 620 440C650 500 650 560 672 590C620 630 620 700 650 720C680 736 720 724 718 714C690 720 670 690 680 660C700 620 740 600 736 550C732 510 710 500 662 498M630 450C680 430 710 410 740 388Q752 390 738 412C700 450 650 470 660 540Q666 560 672 580M476 600C480 660 440 710 390 710C340 710 330 680 370 640C410 610 420 590 410 550Q402 530 394 548C390 620 300 600 296 680C296 740 330 780 380 778L468 772M400 500Q430 500 438 540C420 590 440 620 470 600M504 676C460 700 460 760 480 788C500 820 560 820 580 826C600 850 570 880 530 896Q520 910 540 908C600 900 630 880 618 840C610 800 560 770 560 730Q560 710 566 702M370 780C330 790 320 850 370 866Q400 872 424 860Q440 868 420 880Q380 896 388 906C430 914 470 880 456 850C450 820 400 826 416 810C450 810 480 830 512 814M694 650C720 676 760 680 776 660C790 620 764 600 776 580Q796 560 800 548Q810 560 800 600C820 640 830 700 790 730C750 760 670 744 644 730M644 722C620 760 630 800 652 816C690 830 710 800 750 774Q758 780 740 800C720 850 660 868 622 860" />
        <path d="M474 514L610 474Q614 480 610 496L616 520C610 556 570 544 558 528L546 516L540 524C544 560 500 574 488 540ZM488 520L534 506C542 540 530 556 510 556C494 550 490 536 488 520ZM556 500L602 488C608 520 602 536 584 536C564 532 558 520 556 500Z" />
        <circle cx="569" cy="423" r="6" /><circle cx="591" cy="442" r="7" /><circle cx="556" cy="450" r="5" /><circle cx="632" cy="518" r="6" /><circle cx="636" cy="561" r="10" /><circle cx="613" cy="575" r="6" /><circle cx="642" cy="594" r="5" />
        <path d="M556 574Q564 560 576 564Q576 582 562 584ZM304 636C328 650 338 630 324 620M302 718C330 710 320 690 300 690M332 760C340 736 368 740 366 770M394 774C400 750 432 752 436 774M394 640C420 640 416 620 400 620M414 662C420 646 448 650 448 672M552 740C534 750 536 770 556 776M440 812C444 790 474 790 472 818M586 800C590 830 620 826 606 812M672 650C670 620 706 620 704 646M708 612C700 590 730 584 732 596M720 746C722 716 756 720 760 744M776 712C778 690 806 700 796 716M812 672C790 670 794 648 814 646M800 610C784 604 786 590 800 590M660 470C664 450 686 454 684 472M690 440C694 422 710 430 706 438M650 820C656 796 676 800 680 820M686 822C686 800 712 804 712 812" />
        <Place x={97} y={694}><Heart /></Place>
        <path d="M176 778Q168 766 180 758L270 728Q284 726 286 738L300 780M176 778L196 830L216 832L222 848L238 828L262 818L268 808M206 772L248 756Q260 760 252 768L214 782ZM216 788L252 776Q264 780 258 786L222 796ZM270 794L294 790L290 778L320 792L304 816L300 804L276 808Z" />
        {/* fish */}
        <path d="M192 934C200 900 230 890 246 872L262 886L300 888Q320 880 326 868L328 896L344 910L312 912C290 950 230 962 192 946ZM232 904Q246 924 240 950M250 914Q270 896 278 914Q264 924 254 920" /><circle cx="217" cy="924" r="3" />
        {/* candle */}
        <path d="M60 872Q60 866 70 866L92 866Q104 868 102 886Q98 896 84 890L90 940M60 872L68 942M60 890l22-4M62 906l22-4M64 922l22-4M36 952Q38 944 50 944L118 940Q130 942 132 956L132 978M36 952L40 978" />
        {/* voice message */}
        <path d="M802 752L1086 698L1074 728L1086 782Q1086 796 1076 798L826 852Q812 856 808 844L790 770Q790 756 802 752ZM882 770L914 782L886 804ZM932 778L1052 752M1024 792L1032 796L1044 772M1038 790L1044 794L1056 770M822 802C830 820 858 822 860 796M842 816L846 830" />
        <rect x="830" y="770" width="18" height="38" rx="9" transform="rotate(-8 839 789)" />
        <Place x={667} y={946} s={0.95}><Camera /></Place>
        {/* burger */}
        <path d="M978 914Q980 850 1050 846Q1130 846 1156 890Q1160 900 1150 902L990 920Q978 920 978 914ZM966 934Q978 948 992 938Q1010 946 1020 934Q1040 944 1060 930L1160 918Q1176 920 1168 934L1150 936M966 964Q1040 946 1170 950M966 978V966" />
        <path d="M1010 880l6-8M1036 888l6 6M1054 866l6-8M1074 886l6-4M1090 866l6 6" />
        <path d="M848 978Q856 930 898 930Q930 940 932 978M904 978V956Q910 948 916 958V978" /><circle cx="903" cy="922" r="15" /><circle cx="903" cy="922" r="6" />
        <ellipse cx="426" cy="950" rx="14" ry="16" /><ellipse cx="478" cy="944" rx="21" ry="23" /><ellipse cx="530" cy="958" rx="14" ry="16" />
        <Place x={1130} y={556} s={0.9}><Avatar /></Place>
      </Region>
    </g>
  );
}

function Wallpaper() {
  return (
    <svg
      aria-hidden="true"
      className="pointer-events-none absolute left-0 top-0 h-[774px] w-full [&_*]:[vector-effect:non-scaling-stroke]"
      viewBox="0 82 1222 774"
      preserveAspectRatio="xMinYMin slice"
      fill="none"
      stroke="#333333"
      strokeWidth="1.35"
      strokeLinejoin="round"
      strokeLinecap="round"
    >
      <Doodles />
      <use href="#doodles" x={TILE} />
      <use href="#doodles" x={-TILE} />
    </svg>
  );
}

/* ---------- chat ---------- */

function Ticks() {
  return (
    <svg className="h-3 w-[18px]" viewBox="0 0 18 12" fill="none" stroke="#3a87f2" strokeWidth="2" aria-label="Read">
      <path d="M1 6.5L4.2 10.4L11.6 1" />
      <path d="M8 9L9.2 10.4L16.8 1" />
    </svg>
  );
}

function Stamp({ time, own }: { time: string; own?: boolean }) {
  return (
    <span
      className={
        own
          ? "flex shrink-0 items-center gap-[3px] text-[15px] leading-5 text-[#8fb5ac]"
          : "shrink-0 text-[15px] leading-5 text-[#9c9c9c]"
      }
    >
      {time}
      {own && <Ticks />}
    </span>
  );
}

type Quoted = { name: string; text: string };
type MessageProps = { lines: string[]; time: string; own?: boolean; tail?: boolean; quote?: Quoted };

function Message({ lines, time, own, tail, quote }: MessageProps) {
  const opening = lines.slice(0, -1);
  const last = lines[lines.length - 1];
  return (
    <article
      className={
        (own
          ? "self-end border-[#1a6d5d] bg-[#005c4b] pr-[13px] text-white "
          : "self-start border-[#3f3f3f] bg-[#353535] pr-[10px] text-white ") +
        (quote ? "pt-[14px] " : "pt-[9px] ") +
        (tail ? (own ? "rounded-tr-none " : "rounded-tl-none ") : "") +
        "relative max-w-[852px] rounded-lg border-t pb-2 pl-3 shadow-[0_1px_1px_rgba(0,0,0,0.25)]"
      }
    >
      {tail && (
        <svg
          aria-hidden="true"
          className={own ? "absolute -right-[9px] -top-px h-[10px] w-[10px]" : "absolute -left-[9px] -top-px h-[10px] w-[10px]"}
          viewBox="0 0 10 10"
        >
          {own ? (
            <>
              <path d="M0 0H9Q10 1 9 2L1 10H0Z" fill="#005c4b" />
              <path d="M0 .5H9.4" stroke="#1a6d5d" />
            </>
          ) : (
            <>
              <path d="M10 0H1Q0 1 1 2L9 10H10Z" fill="#353535" />
              <path d="M10 .5H.6" stroke="#3f3f3f" />
            </>
          )}
        </svg>
      )}
      {quote && (
        <blockquote className="mb-2 h-[63px] rounded-md border-l-[6px] border-[#06cf9c] bg-[#1d6b5b] pl-[9px] pr-4 pt-[7px] shadow-[0_1px_3px_rgba(0,0,0,0.2)]">
          <p className="text-[16px] font-semibold leading-[22px] text-[#06cf9c]">{quote.name}</p>
          <p className="text-[17px] leading-[23px] text-[#c3d8d3]">{quote.text}</p>
        </blockquote>
      )}
      {opening.map((line, i) => (
        <p key={i} className="min-h-[29px] text-[20px] leading-[29px]">
          {line}
        </p>
      ))}
      <div className="flex items-end justify-between gap-[26px]">
        <p className="mb-[7px] text-[20px] leading-[29px]">{last}</p>
        <Stamp time={time} own={own} />
      </div>
    </article>
  );
}

function Header() {
  return (
    <header className="flex h-[82px] shrink-0 items-start border-b-2 border-[#1d1d1d] bg-[#272727]">
      <div className="ml-1 mt-[3px] flex size-[58px] shrink-0 items-center justify-center rounded-full bg-[#404040]">
        <svg viewBox="0 0 26 30" className="mb-[1px] h-[30px] w-[26px]" fill="#7f7f7f" aria-hidden="true">
          <circle cx="13" cy="7.5" r="7.3" />
          <path d="M3.5 16.5H22.5Q25.5 16.5 25.5 19.5C25.5 26 20 29.5 13 29.5S.5 26 .5 19.5Q.5 16.5 3.5 16.5Z" />
        </svg>
      </div>
      <h1 className="ml-[19px] mt-4 text-[20px] font-semibold leading-7 text-white">Ustadzah Nungky Dwi Tendik</h1>
      <div className="ml-auto mt-px flex h-[63px] items-center rounded-md border border-[#3a3a3a] bg-[#333333]">
        <button type="button" aria-label="Video call" className="flex h-full w-[83px] items-center justify-center pb-1">
          <svg viewBox="0 0 26 20" className="h-5 w-[26px]" fill="none" stroke="#f2f2f2" strokeWidth="1.6" strokeLinejoin="round">
            <rect x="1.7" y="1.7" width="17" height="17" rx="2.5" />
            <path d="M18.7 8L24 4.2V16.2L18.7 12.4" />
          </svg>
        </button>
        <span className="mb-1 h-9 w-px bg-[#3d3d3d]" />
        <button type="button" aria-label="Voice call" className="flex h-full w-[80px] items-center justify-center pb-1 pr-[3px]">
          <svg viewBox="500 53 60 78" className="h-[26px] w-5" fill="none" stroke="#f2f2f2" strokeWidth="5" strokeLinejoin="round">
            <path d="M510 62C517 56 527 58 530 67C534 77 531 83 521 89C521 97 527 104 535 108C542 102 550 103 555 111C559 117 558 122 551 125C541 131 527 125 517 112C506 97 498 75 510 62Z" />
          </svg>
        </button>
      </div>
      <button type="button" aria-label="Search" className="ml-[15px] mt-px flex h-[63px] w-[58px] items-center justify-center">
        <svg viewBox="0 0 22 22" className="size-[22px]" fill="none" stroke="#f2f2f2" strokeWidth="1.4">
          <circle cx="13" cy="9" r="7.8" />
          <path d="M7.5 14.5L1.5 20.700" />
        </svg>
      </button>
    </header>
  );
}

export default function App() {
  return (
    <div className="flex min-h-screen flex-col bg-[#262626] font-['Open_Sans','Noto_Sans',sans-serif]">
      <Header />
      <main className="relative flex flex-1 flex-col overflow-hidden pb-[35px]">
        <Wallpaper />
        <section className="relative -mt-[27px] flex flex-col pl-[21px] pr-3">
          <Message own lines={["Baik ustadzah"]} time="8:15 AM" />
        </section>
        <time className="relative mt-[17px] self-center rounded-md bg-[#1b1b1b] px-[14px] py-2 text-[17px] leading-6 text-[#c8c8c8]">
          Yesterday
        </time>
        <section className="relative mt-[14px] flex flex-col pl-[21px] pr-3">
          <Message
            own
            tail
            time="9:34 AM"
            lines={[
              "Assalamu'alaikum Wr. Wb.",
              "Ma'af ustadzah mengganggu waktunya. Saya Andri Lesmana Hermawan, ingin meminta surat keterangan yudisium fakultas untuk keperluan pendaftaran wisuda.",
              "",
              "Terimakasih",
            ]}
          />
        </section>
        <section className="relative mt-4 flex flex-col gap-[5px] pl-[21px] pr-3">
          <Message tail lines={["Waalaikumsalam"]} time="9:36 AM" />
          <Message lines={["Pendaftarannya sampek kapan ya?"]} time="9:36 AM" />
          <Message lines={["Nanti sore ya saya share di grup"]} time="9:37 AM" />
        </section>
        <section className="relative mt-[19px] flex flex-col gap-1 pl-[21px] pr-3">
          <Message
            own
            tail
            lines={["Tertulis sampai hari Rabu tanggal 22"]}
            time="9:37 AM"
            quote={{ name: "Ustadzah Nungky Dwi Tendik", text: "Pendaftarannya sampek kapan ya?" }}
          />
          <Message
            own
            lines={["Baik ustadzah"]}
            time="9:38 AM"
            quote={{ name: "Ustadzah Nungky Dwi Tendik", text: "Nanti sore ya saya share di grup" }}
          />
        </section>
      </main>
    </div>
  );
}
